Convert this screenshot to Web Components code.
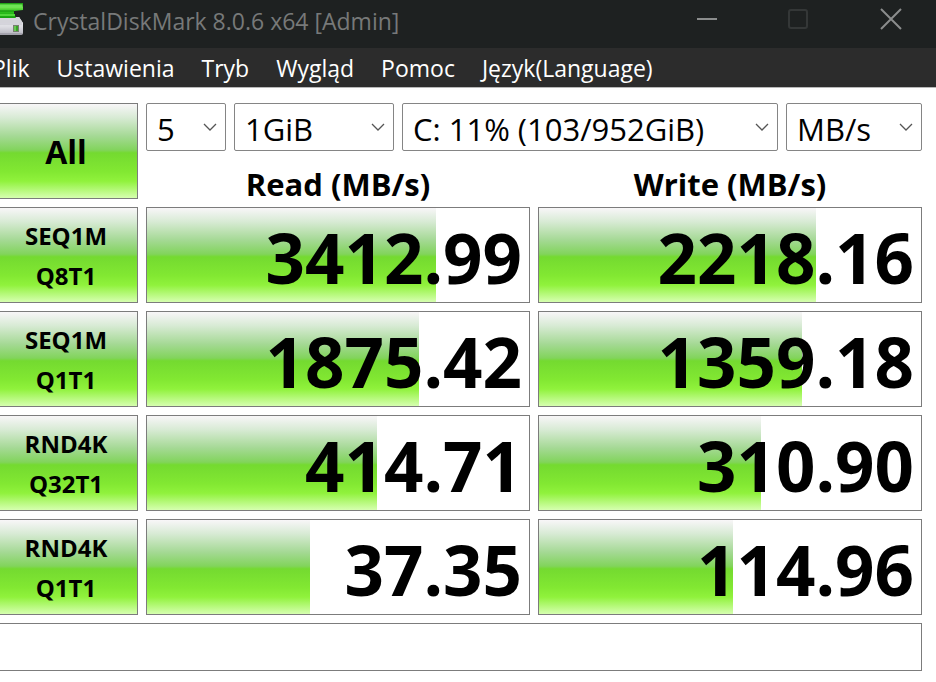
<!DOCTYPE html>
<html lang="pl">
<head>
<meta charset="utf-8">
<title>CrystalDiskMark 8.0.6 x64 [Admin]</title>
<style>
  body {
    margin: 0;
    overflow-x: hidden;
    background: #fff;
    color: #000;
    font-family: "Open Sans", "Noto Sans", sans-serif;
  }
</style>
</head>
<body>
<disk-mark></disk-mark>

<script>
class BaseElement extends HTMLElement {
  constructor() {
    super();
    this.attachShadow({mode: 'open'});
    this.shadowRoot.innerHTML = this.template;
  }
}

class TitleBar extends BaseElement {
  get template() {
    return `
      <style>
      :host { display: flex; align-items: center; height: 48px; padding-right: 24px; background: #1e2121; color: #777979; }
      .logo { width: 32px; height: 36px; flex: none; margin-bottom: 12px; }
      h1 { flex: 1; margin: 0 0 6px 9px; font-size: 23px; line-height: 32px; font-weight: 400; white-space: nowrap; }
      nav { display: flex; gap: 50px; margin-bottom: 10px; }
      button { display: block; width: 42px; height: 32px; padding: 0; border: 0; background: none; color: #8b8d8d; }
      button:disabled { color: #343737; }
      button svg { display: block; margin: auto; }
      </style>
      <svg class="logo" viewBox="0 0 32 36" aria-hidden="true">
        <defs>
          <linearGradient id="g" x1="0" y1="0" x2="0" y2="1"><stop offset="0" stop-color="#189c10"/><stop offset=".3" stop-color="#6fe04c"/><stop offset=".55" stop-color="#2fc41e"/><stop offset="1" stop-color="#15a00e"/></linearGradient>
          <linearGradient id="b" x1="0" y1="0" x2="0" y2="1"><stop offset="0" stop-color="#f4f4f6"/><stop offset=".55" stop-color="#dcdce2"/><stop offset="1" stop-color="#b4b3bc"/></linearGradient>
        </defs>
        <path d="M2 17h25l4 6v10q0 2-2 2H2q-2 0-2-2V23z" fill="url(#b)"/>
        <path d="M2 17h25l4 6H0z" fill="#d4d4da"/>
        <path d="M1 24h29" stroke="#c6c5ce"/>
        <path d="M1 34h29" stroke="#8d8b96"/>
        <path d="M1 3h30v7l-9 1v3l2 4H5l3-4v-3L1 10z" fill="url(#g)"/>
        <path d="M2 6h28" stroke="#6ee455" stroke-width="3"/>
        <path d="M8 11h14" stroke="#158c0e"/>
        <path d="M7 15h16" stroke="#4fd63a" stroke-width="2"/>
        <path d="M21 25h6v7h-6z" fill="#77806f"/>
        <path d="M22 26h4v5h-4z" fill="#38a428"/>
        <path d="M22 26h2v5h-2z" fill="#67c851"/>
      </svg>
      <h1><slot></slot></h1>
      <nav>
        <button aria-label="Minimize"><svg width="22" height="22" viewBox="0 0 22 22" fill="none" stroke="currentColor" stroke-width="2"><path d="M1 11h20"/></svg></button>
        <button aria-label="Maximize" disabled><svg width="22" height="22" viewBox="0 0 22 22" fill="none" stroke="currentColor" stroke-width="2"><rect x="1" y="2" width="18" height="18" rx="2"/></svg></button>
        <button aria-label="Close"><svg width="22" height="22" viewBox="0 0 22 22" fill="none" stroke="currentColor" stroke-width="2"><path d="M1 1l20 20M21 1L1 21"/></svg></button>
      </nav>
    `;
  }
}

class MenuBar extends BaseElement {
  get template() {
    return `
      <style>
      :host { display: flex; gap: 27px; padding-top: 2px; padding-bottom: 1px; background: #2c2c2c; border-bottom: 1px solid #b8b8b8; color: #fff; }
      ::slotted(a) { color: inherit; text-decoration: none; font-size: 23px; line-height: 36px; white-space: nowrap; }
      </style>
      <slot></slot>
    `;
  }
}

class SelectBox extends BaseElement {
  get template() {
    return `
      <style>
      :host { display: grid; grid-template-columns: 1fr; align-items: center; min-width: 0; }
      select, svg { grid-area: 1 / 1; }
      select {
        appearance: none; box-sizing: border-box; width: 100%; height: 48px; padding: 4px 32px 0 10px;
        border: 1px solid #858585; border-radius: 2px; background: #fff; color: #000;
        font-family: inherit; font-size: 31px;
      }
      svg { justify-self: end; margin-right: 9px; pointer-events: none; }
      </style>
      <select><option></option></select>
      <svg width="14" height="8" viewBox="0 0 14 8" fill="none" stroke="#555" stroke-width="1.300"><path d="M1 1l6 6 6-6"/></svg>
    `;
  }
  connectedCallback() {
    this.shadowRoot.querySelector('select').setAttribute('aria-label', this.getAttribute('label'));
    this.shadowRoot.querySelector('option').textContent = this.getAttribute('value');
  }
}

class TestButton extends BaseElement {
  get template() {
    return `
      <style>
      :host { display: block; font-size: 24px; }
      :host([large]) { font-size: 32px; }
      button {
        display: block; box-sizing: border-box; width: 100%; height: 96px; padding: 2px 0 0;
        border: 1px solid #7c7c7c; background: var(--green); color: #000;
        font-family: inherit; font-size: inherit; font-weight: 700; line-height: 40px;
      }
      </style>
      <button><slot></slot></button>
    `;
  }
}

class SpeedMeter extends BaseElement {
  get template() {
    return `
      <style>
      :host { display: grid; align-items: center; box-sizing: border-box; height: 96px; border: 1px solid #7c7c7c; background: #fff; }
      .bar, output { grid-area: 1 / 1; }
      .bar { height: 94px; background: var(--green); }
      output { padding: 4px 7px 0 0; font-size: 69px; line-height: 90px; font-weight: 700; text-align: right; }
      </style>
      <div class="bar"></div>
      <output><slot></slot></output>
    `;
  }
  connectedCallback() {
    this.shadowRoot.querySelector('.bar').style.width = this.getAttribute('fill') + '%';
  }
}

class DiskMark extends BaseElement {
  get template() {
    return `
      <style>
      /* the window hangs a little over the left edge of the screen */
      :host {
        display: block; margin-left: -8px;
        --green: linear-gradient(#f8f6f8 0%, #d9ebd6 14%, #a5d995 34%, #82d45c 49%, #74da30 52%, #82e832 72%, #90f23c 82%, #d6ffb0 100%);
      }
      main { display: grid; grid-template-columns: 144px minmax(0, 1fr) minmax(0, 1fr); gap: 8px; padding: 15px 14px 11px 2px; }
      .top { grid-column: 2 / 4; display: grid; grid-template-columns: 1fr 1fr; gap: 18px 8px; align-content: start; }
      .options { grid-column: 1 / 3; display: grid; grid-template-columns: 80px 160px minmax(0, 1fr) 136px; gap: 8px; }
      h2 { margin: 0; font-size: 31px; line-height: 30px; font-weight: 700; text-align: center; }
      input { grid-column: 1 / 4; box-sizing: border-box; width: 100%; height: 48px; padding: 0 12px; border: 1px solid #7c7c7c; font: inherit; font-size: 31px; }
      </style>
      <title-bar>CrystalDiskMark 8.0.6 x64 [Admin]</title-bar>
      <menu-bar>
        <a href="#">Plik</a>
        <a href="#">Ustawienia</a>
        <a href="#">Tryb</a>
        <a href="#">Wygląd</a>
        <a href="#">Pomoc</a>
        <a href="#">Język(Language)</a>
      </menu-bar>
      <main>
        <test-button large>All</test-button>
        <div class="top">
          <div class="options">
            <select-box label="Test count" value="5"></select-box>
            <select-box label="Test size" value="1GiB"></select-box>
            <select-box label="Drive" value="C: 11% (103/952GiB)"></select-box>
            <select-box label="Unit" value="MB/s"></select-box>
          </div>
          <h2>Read (MB/s)</h2>
          <h2>Write (MB/s)</h2>
        </div>

        <test-button>SEQ1M<br>Q8T1</test-button>
        <speed-meter fill="75.7">3412.99</speed-meter>
        <speed-meter fill="72.5">2218.16</speed-meter>

        <test-button>SEQ1M<br>Q1T1</test-button>
        <speed-meter fill="71.2">1875.42</speed-meter>
        <speed-meter fill="68.8">1359.18</speed-meter>

        <test-button>RND4K<br>Q32T1</test-button>
        <speed-meter fill="60.2">414.71</speed-meter>
        <speed-meter fill="58.1">310.90</speed-meter>

        <test-button>RND4K<br>Q1T1</test-button>
        <speed-meter fill="42.7">37.35</speed-meter>
        <speed-meter fill="50.8">114.96</speed-meter>

        <input type="text" aria-label="Comment">
      </main>
    `;
  }
}

window.customElements.define('title-bar', TitleBar);
window.customElements.define('menu-bar', MenuBar);
window.customElements.define('select-box', SelectBox);
window.customElements.define('test-button', TestButton);
window.customElements.define('speed-meter', SpeedMeter);
window.customElements.define('disk-mark', DiskMark);
</script>
</body>
</html>
